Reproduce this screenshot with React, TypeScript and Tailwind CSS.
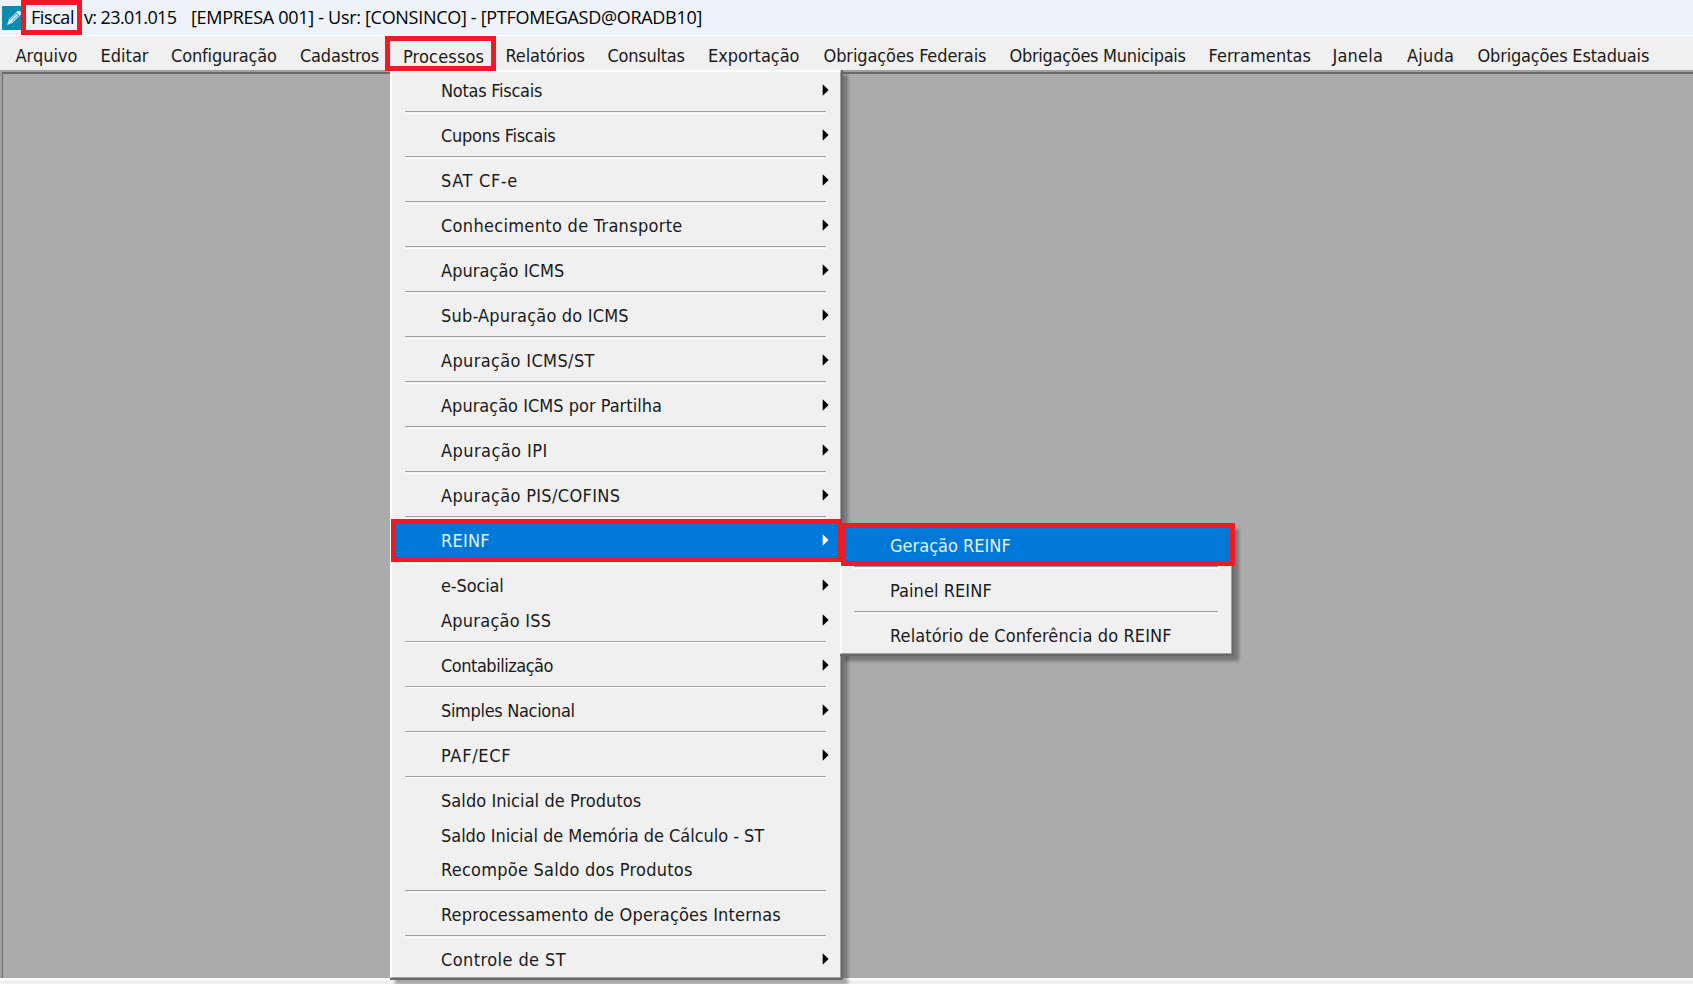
import clsx from 'clsx'

type Item = { label: string; track: string; sub?: boolean; sep?: boolean; active?: boolean }

const MENU_BAR = [
  { label: 'Arquivo', box: 'w-[85px]', track: 'tracking-[0.01px]' },
  { label: 'Editar', box: 'w-[70.5px]', track: 'tracking-[0.01px]' },
  { label: 'Configuração', box: 'w-[129px]', track: 'tracking-[-0.14px]' },
  { label: 'Cadastros', box: 'w-[103px]', track: 'tracking-[-0.2px]' },
  { label: 'Processos', box: 'w-[102.5px] pt-[3px]', track: 'tracking-[0.16px]' },
  { label: 'Relatórios', box: 'w-[102px]', track: 'tracking-[-0.12px]' },
  { label: 'Consultas', box: 'w-[100.5px]', track: 'tracking-[-0.24px]' },
  { label: 'Exportação', box: 'w-[115.5px]', track: 'tracking-[-0.02px]' },
  { label: 'Obrigações Federais', box: 'w-[186px]', track: 'tracking-[-0.1px]' },
  { label: 'Obrigações Municipais', box: 'w-[199px]', track: 'tracking-[-0.29px]' },
  { label: 'Ferramentas', box: 'w-[124px]', track: 'tracking-[0.06px]' },
  { label: 'Janela', box: 'w-[74.5px]', track: 'tracking-[0.2px]' },
  { label: 'Ajuda', box: 'w-[70.5px]', track: 'tracking-[0.2px]' },
  { label: 'Obrigações Estaduais', box: 'w-[175px]', track: 'tracking-[-0.17px]' },
] as const

const PROCESSOS: Item[] = [
  { label: 'Notas Fiscais', track: 'tracking-[-0.26px]', sub: true, sep: true },
  { label: 'Cupons Fiscais', track: 'tracking-[-0.27px]', sub: true, sep: true },
  { label: 'SAT CF-e', track: 'tracking-[0.65px]', sub: true, sep: true },
  { label: 'Conhecimento de Transporte', track: 'tracking-[0.31px]', sub: true, sep: true },
  { label: 'Apuração ICMS', track: 'tracking-[0.07px]', sub: true, sep: true },
  { label: 'Sub-Apuração do ICMS', track: 'tracking-[0.19px]', sub: true, sep: true },
  { label: 'Apuração ICMS/ST', track: 'tracking-[0.36px]', sub: true, sep: true },
  { label: 'Apuração ICMS por Partilha', track: 'tracking-[0.01px]', sub: true, sep: true },
  { label: 'Apuração IPI', track: 'tracking-[0.44px]', sub: true, sep: true },
  { label: 'Apuração PIS/COFINS', track: 'tracking-[0.34px]', sub: true, sep: true },
  { label: 'REINF', track: 'tracking-[0.25px]', sub: true, sep: true, active: true },
  { label: 'e-Social', track: 'tracking-[-0.15px]', sub: true },
  { label: 'Apuração ISS', track: 'tracking-[0.24px]', sub: true, sep: true },
  { label: 'Contabilização', track: 'tracking-[-0.48px]', sub: true, sep: true },
  { label: 'Simples Nacional', track: 'tracking-[-0.33px]', sub: true, sep: true },
  { label: 'PAF/ECF', track: 'tracking-[0.72px]', sub: true, sep: true },
  { label: 'Saldo Inicial de Produtos', track: 'tracking-[0.06px]' },
  { label: 'Saldo Inicial de Memória de Cálculo - ST', track: 'tracking-[-0.04px]' },
  { label: 'Recompõe Saldo dos Produtos', track: 'tracking-[0.25px]', sep: true },
  { label: 'Reprocessamento de Operações Internas', track: 'tracking-[0.17px]', sep: true },
  { label: 'Controle de ST', track: 'tracking-[0.42px]', sub: true },
]

const REINF: Item[] = [
  { label: 'Geração REINF', track: 'tracking-[0.01px]', sep: true, active: true },
  { label: 'Painel REINF', track: 'tracking-[0.07px]', sep: true },
  { label: 'Relatório de Conferência do REINF', track: 'tracking-[0.12px]' },
]

function MenuRows({ items }: { items: Item[] }) {
  return (
    <>
      {items.map((item) => (
        <div key={item.label}>
          <div
            className={clsx(
              'flex h-[34.64px] items-center justify-between pl-[47px] pr-[9.5px]',
              item.active ? 'bg-[#0078d7] text-[#e4f1fb]' : 'text-[#1a1a1a]',
            )}
          >
            <span className={clsx('whitespace-nowrap pt-[2px] leading-none', item.track)}>{item.label}</span>
            {item.sub && (
              <svg viewBox="0 0 7 12" className={clsx('mb-px h-3 w-[7px]', item.active ? 'fill-white' : 'fill-black')}>
                <path d="M0.7 0.3 L6.6 6 L0.7 11.7 Z" />
              </svg>
            )}
          </div>
          {item.sep && (
            <div className="h-[10.4px] pl-[11px] pr-[12px] pt-[3.6px]">
              <div className="h-[2.4px] border-b border-t border-b-white border-t-[#a0a0a0]" />
            </div>
          )}
        </div>
      ))}
    </>
  )
}

function PencilIcon() {
  return (
    <svg viewBox="0 0 24 24" className="ml-[2px] h-6 w-6 shrink-0">
      <rect width="24" height="24" fill="#0f8bb0" />
      <path d="M5 19 L7.2 13.2 L15 5.5 Q17 4 18.6 5.6 Q20 7.2 18.4 9 L10.6 16.8 Z" fill="#d5e9f0" />
      <path d="M8.5 13.5 L15.2 7 M10.2 15.3 L17 8.6 M13.8 6.8 L17.2 10.2" stroke="#0f8bb0" strokeWidth="0.8" fill="none" />
    </svg>
  )
}

export default function App() {
  return (
    <div className="relative flex h-[984px] w-[1693px] flex-col overflow-hidden bg-[#f0f0f0] font-['DejaVu_Sans_Condensed','DejaVu_Sans',sans-serif] text-[18px] text-[#1a1a1a]">
      <header className="flex h-[35px] shrink-0 items-center bg-[#eef3fa] font-['Open_Sans','Noto_Sans',sans-serif] text-black">
        <PencilIcon />
        <span className="ml-[5px] w-[53px] whitespace-nowrap tracking-[-0.42px]">Fiscal</span>
        <span className="w-[107px] whitespace-nowrap tracking-[-0.62px]">v: 23.01.015</span>
        <span className="whitespace-nowrap tracking-[-0.3px]">[EMPRESA 001] - Usr: [CONSINCO] - [PTFOMEGASD@ORADB10]</span>
      </header>

      <nav className="flex h-[35px] shrink-0 items-center border-t border-white pl-[15.5px] pt-[5px]">
        {MENU_BAR.map((m) => (
          <span key={m.label} className={clsx('shrink-0 whitespace-nowrap leading-none', m.box, m.track)}>
            {m.label}
          </span>
        ))}
      </nav>

      <main className="h-[908px] shrink-0 border-l-2 border-t-2 border-l-[#a0a0a0] border-t-[#a0a0a0]">
        <div className="h-full border-l border-t-2 border-[#696969] bg-[#ababab]" />
      </main>
      <footer className="h-[6px] border-t-2 border-white bg-[#f0f0f0]" />

      {/* Processos drop-down */}
      <div className="absolute left-[390px] top-[70px] h-[910px] w-[453px] border-b-2 border-r-2 border-[#696969] bg-[#f0f0f0] shadow-[5px_5px_3px_rgba(0,0,0,0.3)]">
        <div className="h-full border-b border-l-2 border-r border-t-2 border-b-[#a0a0a0] border-l-white border-r-[#a0a0a0] border-t-white px-[2px] pt-[0.9px]">
          <MenuRows items={PROCESSOS} />
        </div>
      </div>

      {/* REINF fly-out */}
      <div className="absolute left-[840px] top-[524px] h-[132px] w-[394px] border-b-2 border-r-2 border-[#696969] bg-[#f0f0f0] shadow-[5px_5px_3px_rgba(0,0,0,0.3)]">
        <div className="h-full border-b border-l-2 border-r border-t border-b-[#a0a0a0] border-l-white border-r-[#a0a0a0] border-t-white px-px pt-[3px]">
          <MenuRows items={REINF} />
        </div>
      </div>

      {/* highlight frames */}
      <div className="absolute left-[21px] top-0 h-[35px] w-[61px] border-[5px] border-[#ed1c24]" />
      <div className="absolute left-[385px] top-[36px] h-[35px] w-[111px] border-[5px] border-[#ed1c24]" />
      <div className="absolute left-[391px] top-[519px] h-[43px] w-[451px] border-[5px] border-[#ed1c24]" />
      <div className="absolute left-[841px] top-[523px] h-[43px] w-[394px] border-[5px] border-[#ed1c24]" />
    </div>
  )
}
